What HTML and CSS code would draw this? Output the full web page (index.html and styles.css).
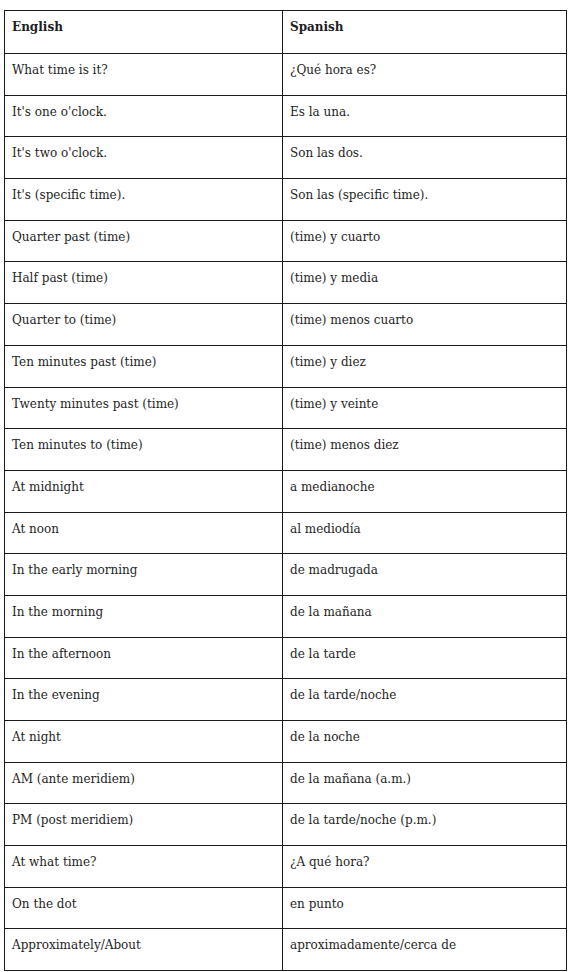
FILE: index.html
```html
<!DOCTYPE html>
<html>
<head>
<meta charset="utf-8">
<link rel="stylesheet" href="styles.css">
</head>
<body>
<table class="vocab">
<thead>
<tr><th class="col-en">English</th><th class="col-es">Spanish</th></tr>
</thead>
<tbody>
<tr><td>What time is it?</td><td>¿Qué hora es?</td></tr>
<tr><td>It's one o'clock.</td><td>Es la una.</td></tr>
<tr><td>It's two o'clock.</td><td>Son las dos.</td></tr>
<tr><td>It's (specific time).</td><td>Son las (specific time).</td></tr>
<tr><td>Quarter past (time)</td><td>(time) y cuarto</td></tr>
<tr><td>Half past (time)</td><td>(time) y media</td></tr>
<tr><td>Quarter to (time)</td><td>(time) menos cuarto</td></tr>
<tr><td>Ten minutes past (time)</td><td>(time) y diez</td></tr>
<tr><td>Twenty minutes past (time)</td><td>(time) y veinte</td></tr>
<tr><td>Ten minutes to (time)</td><td>(time) menos diez</td></tr>
<tr><td>At midnight</td><td>a medianoche</td></tr>
<tr><td>At noon</td><td>al mediodía</td></tr>
<tr><td>In the early morning</td><td>de madrugada</td></tr>
<tr><td>In the morning</td><td>de la mañana</td></tr>
<tr><td>In the afternoon</td><td>de la tarde</td></tr>
<tr><td>In the evening</td><td>de la tarde/noche</td></tr>
<tr><td>At night</td><td>de la noche</td></tr>
<tr><td>AM (ante meridiem)</td><td>de la mañana (a.m.)</td></tr>
<tr><td>PM (post meridiem)</td><td>de la tarde/noche (p.m.)</td></tr>
<tr><td>At what time?</td><td>¿A qué hora?</td></tr>
<tr><td>On the dot</td><td>en punto</td></tr>
<tr><td>Approximately/About</td><td>aproximadamente/cerca de</td></tr>
</tbody>
</table>
</body>
</html>
```
FILE: styles.css
```css
html, body {
  margin: 0;
  padding: 0;
  background: #ffffff;
}
body {
  font-family: "DejaVu Serif", "Liberation Serif", serif;
  font-size: 12px;
  color: #1e1e24;
}
.vocab {
  margin: 10px 0 0 4px;
  width: 563px;
  border-collapse: collapse;
  table-layout: fixed;
}
.vocab th,
.vocab td {
  border: 1px solid #1a1a1a;
  height: 26.7px;
  padding: 8px 7px 6px 7px;
  vertical-align: top;
  text-align: left;
  line-height: 16px;
}
.vocab th {
  font-weight: bold;
  height: 28px;
}
.col-en { width: 263px; }
.col-es { width: auto; }
```
